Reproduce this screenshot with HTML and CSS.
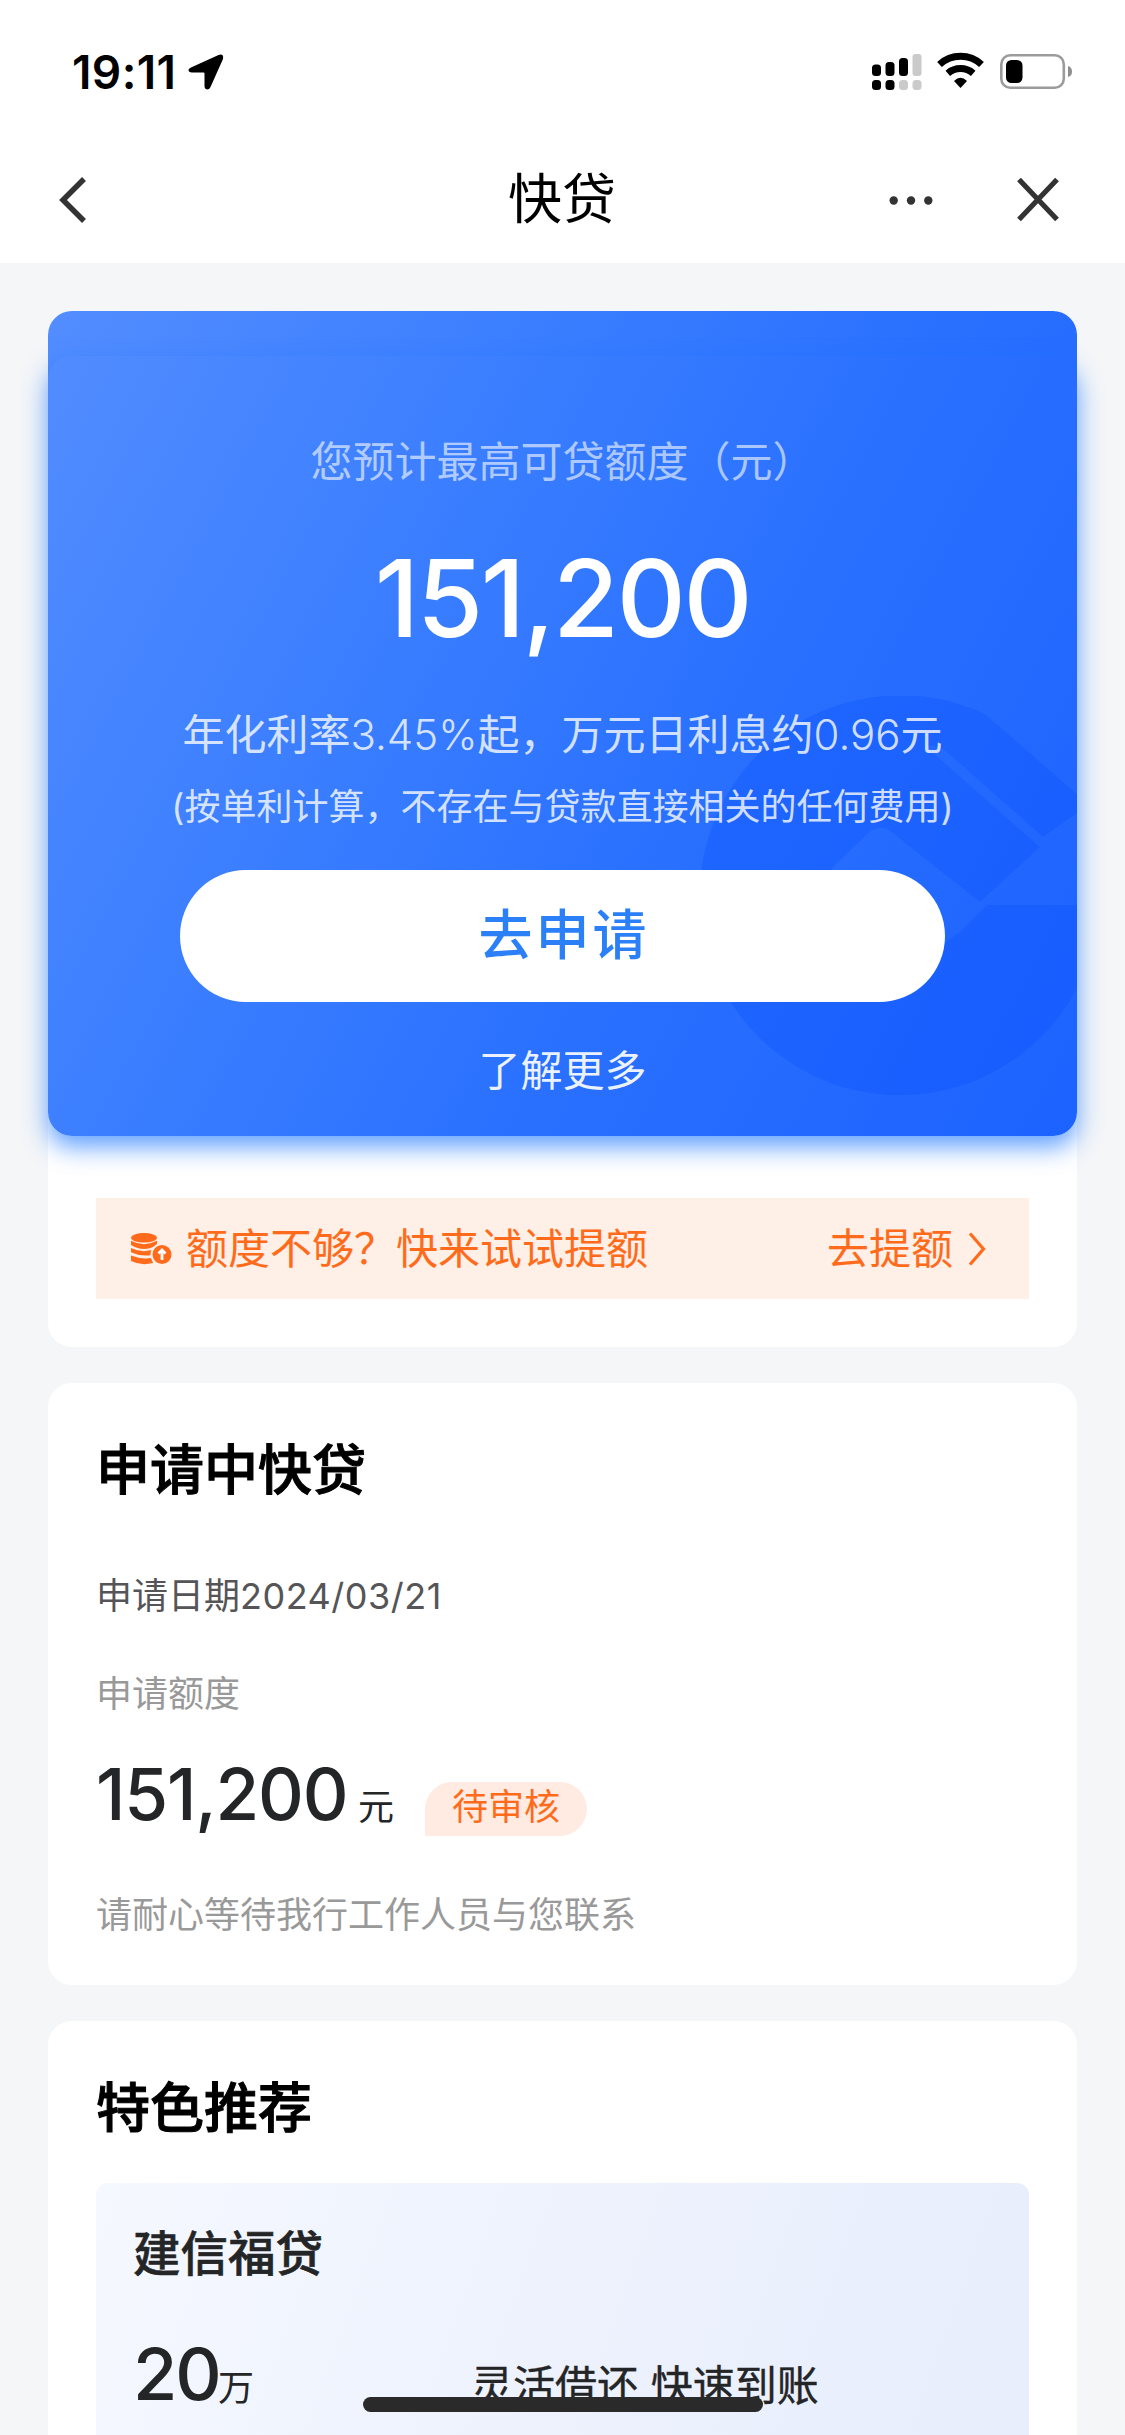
FILE: index.html
```html
<!DOCTYPE html>
<html lang="zh-CN">
<head>
<meta charset="utf-8">
<title>快贷</title>
<link rel="stylesheet" href="styles.css">
</head>
<body>
<header class="top">
  <div class="status">
    <div class="status-left">
      <span class="clock">19:11</span>
      <svg class="loc" width="36" height="38" viewBox="0 0 36 38"><path d="M3 14.500L30.500 2Q36 0 35 6L22.500 34Q21.500 36.500 19 36.500Q16.500 36 16.500 33V20.500Q16.500 19.500 15.500 19.500H4Q0.500 19 0.500 17Q0.500 15.500 3 14.500Z" transform="translate(0 -1)"/></svg>
    </div>
    <div class="status-right">
      <svg width="50" height="40" viewBox="0 0 50 40">
        <g fill="#000"><rect x="0" y="12.500" width="9" height="11.500" rx="3.500"/><rect x="13.500" y="10" width="9" height="14" rx="3.500"/><rect x="27" y="6" width="9" height="18" rx="3.500"/><rect x="0" y="28" width="9" height="10" rx="3.500"/><rect x="13.500" y="28" width="9" height="10" rx="3.500"/></g>
        <g fill="#cacaca"><rect x="40.500" y="2" width="9" height="22" rx="3"/><rect x="27" y="28" width="9" height="10" rx="3.500"/><rect x="40.500" y="28" width="9" height="10" rx="3.500"/></g>
      </svg>
      <svg width="48" height="38" viewBox="0 0 48 38">
        <path d="M2.500 12.500A31 31 0 0 1 44.500 12.500" fill="none" stroke="#000" stroke-width="7"/>
        <path d="M10.800 21.300A19.500 19.500 0 0 1 36.200 21.300" fill="none" stroke="#000" stroke-width="7"/>
        <path d="M23.500 36L17 29Q23.500 22.500 30 29Z"/>
      </svg>
      <svg width="74" height="38" viewBox="0 0 74 38">
        <rect x="1.300" y="3.300" width="62.500" height="32.500" rx="9" fill="none" stroke="#9b9b9b" stroke-width="2.600"/>
        <rect x="6" y="8" width="16.500" height="23" rx="5.500"/>
        <path d="M68 14Q72 15 72 19.500T68 25Z" fill="#8e8e8e"/>
      </svg>
    </div>
  </div>
  <nav class="nav">
    <svg class="back" width="30" height="50" viewBox="0 0 30 50"><path d="M26 4L5 25L26 46" fill="none" stroke="#333" stroke-width="5.500"/></svg>
    <h1 class="nav-title">快贷</h1>
    <div class="nav-actions">
      <svg width="44" height="12" viewBox="0 0 44 12" fill="#333"><circle cx="4.700" cy="6.500" r="4.200"/><circle cx="22" cy="6.500" r="4.200"/><circle cx="39.300" cy="6.500" r="4.200"/></svg>
      <svg width="44" height="46" viewBox="0 0 44 46"><path d="M3 2.500L41 42.500M41 2.500L3 42.500" stroke="#333" stroke-width="5.200"/></svg>
    </div>
  </nav>
</header>
<main class="content">
  <section class="card offer">
    <div class="hero">
      <svg class="emblem" width="380" height="404" viewBox="0 0 380 404">
        <path d="M273 12A200 200 0 1 0 380 292V209H290L263 236L200 280L100 230L136 171L170 138Q180 128 192 134L283 206L343 151L228 50Q240 48 250 56L346 141L380 117V98L290 20Q282 14 273 12Z"/>
      </svg>
      <p class="hero-label">您预计最高可贷额度（元）</p>
      <p class="hero-amount">151,200</p>
      <p class="hero-rate">年化利率<span>3.45%</span>起，万元日利息约<span>0.96</span>元</p>
      <p class="hero-note">(按单利计算，不存在与贷款直接相关的任何费用)</p>
      <a class="apply">去申请</a>
      <a class="more">了解更多</a>
    </div>
    <div class="boost">
      <svg class="coins" width="42" height="32" viewBox="0 0 42 32"><g fill="#ff6b1b"><ellipse cx="13" cy="4.800" rx="13" ry="4.800"/><path d="M0 7.800Q13 14.500 26 7.800V12Q13 20 0 12Z"/><path d="M0 15Q13 21.500 26 15L24 18L21 22Q10 24 0 19.200Z"/><path d="M0 22.500Q10 26.500 20.500 25L22 30Q10 33 0 28Z"/><circle cx="31" cy="21.500" r="10.500" stroke="#fef0e8" stroke-width="2"/></g><path d="M31 27V17.500M27.500 20.500L31 17L34.500 20.500" fill="none" stroke="#fff" stroke-width="2.800"/></svg>
      <span class="boost-text">额度不够？快来试试提额</span>
      <span class="boost-link">去提额</span>
      <svg width="18" height="34" viewBox="0 0 18 34"><path d="M2 1.500L15.500 17L2 32.500" fill="none" stroke="#ff6b1b" stroke-width="3.200"/></svg>
    </div>
  </section>
  <section class="card pending">
    <h2 class="title">申请中快贷</h2>
    <p class="date">申请日期<span>2024/03/21</span></p>
    <p class="muted">申请额度</p>
    <div class="amount-row"><span class="amount">151,200</span><span class="unit">元</span><span class="badge">待审核</span></div>
    <p class="muted tip">请耐心等待我行工作人员与您联系</p>
  </section>
  <section class="card featured">
    <h2 class="title">特色推荐</h2>
    <div class="product">
      <h3 class="product-name">建信福贷</h3>
      <div class="product-row"><span class="product-amount">20</span><span class="product-unit">万</span><span class="slogan">灵活借还 快速到账</span></div>
    </div>
  </section>
</main>
<div class="home-bar"></div>
</body>
</html>
```
FILE: styles.css
```css
* { box-sizing: border-box; margin: 0; padding: 0; }
body {
  width: 1125px; height: 2435px; overflow: hidden; position: relative;
  background: #f4f6f8; color: #000;
  font-family: Inter, "Noto Sans CJK SC", sans-serif;
}
svg { display: block; flex: none; }
p, h1, h2, h3, span, a { white-space: nowrap; }

.top { height: 263px; background: #fff; }
.status { height: 137px; padding: 52px 51px 0 72px; display: flex; justify-content: space-between; }
.status-left { display: flex; }
.clock { width: 116px; font-size: 46px; font-weight: 600; line-height: 40px; letter-spacing: .4px; }
.loc { margin-top: 2px; }
.status-right { display: flex; gap: 15px; }
.nav { height: 126px; padding: 0 65px 0 64px; display: grid; grid-template-columns: 1fr auto 1fr; align-items: center; }
.back { margin-left: -6px; }
.nav-title { font-size: 54px; font-weight: 400; line-height: 80px; }
.nav-actions { display: flex; align-items: center; justify-content: flex-end; gap: 83px; }

.content { padding: 48px 48px 0; display: flex; flex-direction: column; gap: 36px; }
.card { background: #fff; border-radius: 24px; }

.offer { height: 1036px; }
.hero {
  position: relative; height: 825px; padding-top: 121px; border-radius: 24px;
  display: flex; flex-direction: column; align-items: center;
  background: linear-gradient(118deg, #538dff 0%, #397dff 36%, #2a71ff 60%, #1c62ff 100%);
  color: #fff;
}
.hero::before {
  content: ""; position: absolute; inset: 45px 0 0; border-radius: 24px;
  box-shadow: 0 11px 24px rgba(24, 116, 255, .68);
}
.emblem { position: absolute; right: 0; top: 385px; fill: #0a50ff; opacity: .3; }
.hero p, .hero a { position: relative; }
.hero-label { font-size: 42px; line-height: 60px; color: rgba(255, 255, 255, .6); }
.hero-amount { margin-top: 46px; font-size: 107px; line-height: 120px; font-weight: 500; letter-spacing: -2.300px; }
.hero-rate { margin-top: 47px; font-size: 42px; line-height: 60px; color: rgba(255, 255, 255, .8); }
.hero-rate span { font-weight: 300; }
.hero-note { margin-top: 17px; font-size: 36px; line-height: 50px; color: rgba(255, 255, 255, .8); }
.apply {
  margin-top: 38px; width: 765px; height: 132px; padding-left: 3px; border-radius: 66px; background: #fff;
  font-size: 54px; line-height: 132px; letter-spacing: 3px; text-align: center; font-weight: 500; color: #2b80f8;
}
.more { margin-top: 39px; font-size: 42px; line-height: 60px; color: rgba(255, 255, 255, .92); }

.boost {
  margin: 62px 48px 0; height: 101px; padding: 0 43px 0 35px; display: flex; align-items: center;
  background: #fef0e7; color: #ff6b1b; font-size: 42px; line-height: 60px;
}
.boost-text { margin-left: 13px; flex: 1; }
.boost-link { margin-right: 15px; }

.title { font-size: 54px; font-weight: 500; line-height: 60px; -webkit-text-stroke: 1px currentColor; }
.pending { height: 602px; padding: 58px 48px 0; }
.date { margin-top: 70px; font-size: 36px; line-height: 50px; color: #555558; }
.date span { letter-spacing: .5px; }
.muted { margin-top: 48px; font-size: 36px; line-height: 50px; color: #999; }
.amount-row { margin-top: 45px; height: 72px; display: flex; }
.amount { width: 262px; font-size: 71px; line-height: 60px; font-weight: 500; letter-spacing: -1.200px; color: #242526; }
.unit { width: 67px; font-size: 36px; line-height: 87px; color: #242526; }
.badge {
  margin-top: 18px; width: 162px; height: 54px; border-radius: 27px 27px 27px 0; background: #ffebe1;
  text-align: center; font-size: 36px; line-height: 50px; color: #ff6b1b;
}
.tip { margin-top: 54px; }

.featured { height: 500px; padding: 58px 48px 0; }
.product {
  margin-top: 44px; height: 300px; padding: 41px 37px 0; border-radius: 12px;
  background: linear-gradient(110deg, #f5f8ff, #edf2fd 50%, #e8eefc 90%);
  color: #242526;
}
.product-name { font-size: 47.500px; font-weight: 500; line-height: 60px; -webkit-text-stroke: .6px currentColor; }
.product-row { margin-top: 60px; display: flex; line-height: 60px; }
.product-amount { width: 85px; font-size: 72px; font-weight: 500; letter-spacing: -2px; }
.product-unit { width: 253px; padding-top: 14px; font-size: 36px; }
.slogan { padding-top: 12px; font-size: 42px; -webkit-text-stroke: .4px currentColor; }
.home-bar { position: absolute; left: 363px; top: 2397px; width: 400px; height: 15px; border-radius: 8px; background: #2a2a2a; }
```
